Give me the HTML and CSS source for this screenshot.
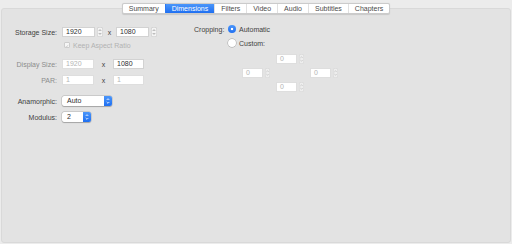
FILE: index.html
```html
<!DOCTYPE html>
<html lang="en">
<head>
  <meta charset="UTF-8" />
  <title>Dimensions</title>
  <link rel="stylesheet" href="styles.css">
</head>
<body>
  <div class="window">
    <!-- Tab strip -->
    <div class="tabs">
      <span class="tab">Summary</span>
      <span class="tab active">Dimensions</span>
      <span class="tab">Filters</span>
      <span class="tab">Video</span>
      <span class="tab">Audio</span>
      <span class="tab">Subtitles</span>
      <span class="tab">Chapters</span>
    </div>

    <div class="panel">
      <!-- Size settings -->
      <div class="col-left">
        <div class="row storage">
          <span class="lbl">Storage Size:</span>
          <span class="field w33">1920</span>
          <span class="stepper"><svg width="6" height="10" viewBox="0 0 6 10"><path d="M1.8 3.9 L3 2.7 L4.2 3.9 M1.8 6.1 L3 7.3 L4.2 6.1" fill="none" stroke="#7a7a7a" stroke-width="0.7"/></svg></span>
          <span class="times">x</span>
          <span class="field w33">1080</span>
          <span class="stepper"><svg width="6" height="10" viewBox="0 0 6 10"><path d="M1.8 3.9 L3 2.7 L4.2 3.9 M1.8 6.1 L3 7.3 L4.2 6.1" fill="none" stroke="#7a7a7a" stroke-width="0.7"/></svg></span>
        </div>
        <div class="row keep">
          <span class="check"><svg width="6" height="6" viewBox="0 0 6 6"><path d="M1.3 3.2 L2.5 4.5 L4.8 1.3" fill="none" stroke="#b3b3b3" stroke-width="0.7"/></svg></span>
          <span class="off">Keep Aspect Ratio</span>
        </div>
        <div class="row display">
          <span class="lbl dim">Display Size:</span>
          <span class="field off w32">1920</span>
          <span class="times wide">x</span>
          <span class="field w31">1080</span>
        </div>
        <div class="row par">
          <span class="lbl dim">PAR:</span>
          <span class="field off w32">1</span>
          <span class="times wide">x</span>
          <span class="field off w31">1</span>
        </div>
        <div class="row anam">
          <span class="lbl">Anamorphic:</span>
          <span class="popup w50"><span class="val">Auto</span><span class="arrows"><svg width="8" height="10" viewBox="0 0 8 10"><path d="M2.7 4 L4 2.7 L5.3 4 M2.7 6 L4 7.3 L5.3 6" fill="none" stroke="#fff" stroke-width="0.8"/></svg></span></span>
        </div>
        <div class="row modulus">
          <span class="lbl">Modulus:</span>
          <span class="popup w29"><span class="val">2</span><span class="arrows"><svg width="8" height="10" viewBox="0 0 8 10"><path d="M2.7 4 L4 2.7 L5.3 4 M2.7 6 L4 7.3 L5.3 6" fill="none" stroke="#fff" stroke-width="0.8"/></svg></span></span>
        </div>
      </div>

      <!-- Cropping -->
      <div class="col-right">
        <div class="row">
          <span class="crop-lbl">Cropping:</span>
          <span class="radio on"></span>
          <span>Automatic</span>
        </div>
        <div class="row custom">
          <span class="radio"></span>
          <span>Custom:</span>
        </div>
        <div class="crop-grid">
          <div class="cell top"><span class="field off w21">0</span><span class="stepper small"><svg width="5" height="10" viewBox="0 0 5 10"><path d="M1.4 3.9 L2.5 2.8 L3.6 3.9 M1.4 6.1 L2.5 7.2 L3.6 6.1" fill="none" stroke="#b0b0b0" stroke-width="0.6"/></svg></span></div>
          <div class="cell left"><span class="field off w21">0</span><span class="stepper small"><svg width="5" height="10" viewBox="0 0 5 10"><path d="M1.4 3.9 L2.5 2.8 L3.6 3.9 M1.4 6.1 L2.5 7.2 L3.6 6.1" fill="none" stroke="#b0b0b0" stroke-width="0.6"/></svg></span></div>
          <div class="cell right"><span class="field off w21">0</span><span class="stepper small"><svg width="5" height="10" viewBox="0 0 5 10"><path d="M1.4 3.9 L2.5 2.8 L3.6 3.9 M1.4 6.1 L2.5 7.2 L3.6 6.1" fill="none" stroke="#b0b0b0" stroke-width="0.6"/></svg></span></div>
          <div class="cell bottom"><span class="field off w21">0</span><span class="stepper small"><svg width="5" height="10" viewBox="0 0 5 10"><path d="M1.4 3.9 L2.5 2.8 L3.6 3.9 M1.4 6.1 L2.5 7.2 L3.6 6.1" fill="none" stroke="#b0b0b0" stroke-width="0.6"/></svg></span></div>
        </div>
      </div>
    </div>
  </div>
</body>
</html>
```

FILE: styles.css
```css
* {
  margin: 0;
  padding: 0;
  box-sizing: border-box;
}
body {
  width: 512px;
  height: 244px;
  overflow: hidden;
  background: #ececec;
  font-family: "Liberation Sans", Arial, sans-serif;
  font-size: 7px;
  color: #3e3e3e;
}
.window {
  height: 244px;
  padding-top: 3px;
  display: flex;
  flex-direction: column;
}

/* Tabs */
.tabs {
  align-self: center;
  display: flex;
  height: 11px;
  background: #fff;
  border: 1px solid #cbcbcb;
  border-radius: 2px;
  box-shadow: 0 0.5px 1px rgba(0, 0, 0, 0.12);
  position: relative;
  z-index: 1;
}
.tab {
  padding: 0 6px;
  line-height: 9px;
  border-left: 1px solid #e0e0e0;
  color: #4a4a4a;
}
.tab:first-child {
  border-left: 0;
}
.tab.active {
  background: linear-gradient(#4b96fa, #1f6ff1);
  color: #fff;
  border-left-color: #2a78f3;
}

/* Panel */
.panel {
  flex: 1;
  margin: -6px 1px 1px;
  background: #e3e3e3;
  border: 1px solid #d9d9d9;
  border-radius: 3px;
  display: flex;
}
.row {
  display: flex;
  align-items: center;
  height: 10px;
}
.lbl {
  width: 55px;
  margin-right: 5px;
  text-align: right;
}
.lbl.dim {
  color: #8c8c8c;
}
.off {
  color: #b2b2b2;
}
.field {
  height: 10px;
  background: #fff;
  border: 1px solid #d2d2d2;
  padding-left: 3px;
  line-height: 8px;
  color: #2e2e2e;
}
.field.off {
  border-color: #dedede;
  color: #b4b4b4;
}
.w21 { width: 21px; }
.w31 { width: 31px; }
.w32 { width: 32px; }
.w33 { width: 33px; }
.stepper {
  margin-left: 2px;
  width: 6px;
  height: 10px;
  display: flex;
  background: #f4f4f4;
  border-radius: 2px;
  box-shadow: inset 0 0 0 0.5px #c2c2c2;
}
.stepper.small {
  width: 5px;
  background: #eeeeee;
  box-shadow: inset 0 0 0 0.5px #d2d2d2;
}
.times {
  width: 13px;
  text-align: center;
}
.times.wide {
  width: 19px;
}

/* Left column */
.col-left {
  width: 192px;
  padding-top: 18px;
}
.keep {
  margin-top: 3px;
  padding-left: 62px;
}
.check {
  width: 6px;
  height: 6px;
  margin-right: 3px;
  background: #f6f6f6;
  border: 0.5px solid #cdcdcd;
  border-radius: 1px;
  display: flex;
}
.display {
  margin-top: 9px;
}
.par {
  margin-top: 6px;
}
.anam {
  margin-top: 11px;
}
.modulus {
  margin-top: 6px;
}
.popup {
  display: flex;
  height: 10px;
  background: #fff;
  border-radius: 2px;
  box-shadow: 0 0 0 0.5px rgba(0, 0, 0, 0.18), 0 0.5px 1px rgba(0, 0, 0, 0.2);
}
.popup .val {
  padding-left: 5px;
  line-height: 10px;
  color: #2e2e2e;
}
.popup .arrows {
  margin-left: auto;
  width: 8px;
  background: linear-gradient(#4b96fa, #1f6ff1);
  border-radius: 0 2px 2px 0;
  display: flex;
}
.w29 { width: 29px; }
.w50 { width: 50px; }

/* Right column */
.col-right {
  padding-top: 15px;
}
.crop-lbl {
  width: 30px;
  margin-right: 4px;
  text-align: right;
}
.radio {
  width: 8px;
  height: 8px;
  margin-right: 3px;
  border-radius: 50%;
  background: #fff;
  box-shadow: 0 0 0 0.5px rgba(0, 0, 0, 0.3);
}
.radio.on {
  background: radial-gradient(circle, #fff 0 1.3px, transparent 1.6px), linear-gradient(#4b96fa, #1f6ff1);
  box-shadow: none;
}
.custom {
  margin-top: 4px;
  padding-left: 34px;
}
.crop-grid {
  margin: 6px 0 0 48px;
  display: grid;
  grid-template-columns: repeat(3, 28px);
  grid-template-rows: repeat(3, 10px);
  column-gap: 6px;
  row-gap: 4px;
}
.cell {
  display: flex;
}
.cell.top { grid-column: 2; grid-row: 1; }
.cell.left { grid-column: 1; grid-row: 2; }
.cell.right { grid-column: 3; grid-row: 2; }
.cell.bottom { grid-column: 2; grid-row: 3; }
```
